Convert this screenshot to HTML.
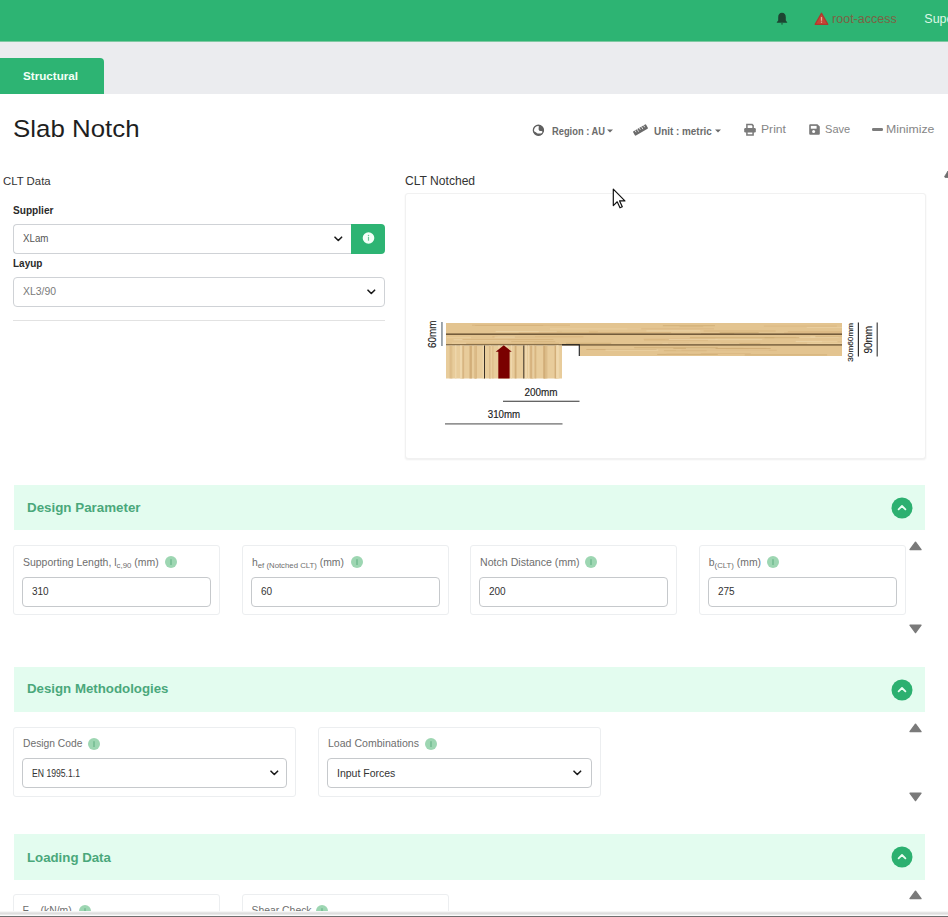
<!DOCTYPE html>
<html><head><meta charset="utf-8"><style>
html,body{margin:0;padding:0;width:948px;height:917px;overflow:hidden;background:#fff;}
body{position:relative;font-family:"Liberation Sans", sans-serif;}
.t{position:absolute;white-space:nowrap;}
sub{font-size:0.75em;vertical-align:-0.3em;line-height:0;}
</style></head><body>
<div style="position:absolute;left:0px;top:0px;width:948px;height:41px;background:#2db473;"></div><div style="position:absolute;left:0px;top:41px;width:948px;height:1px;background:#7fc9a2;"></div><div style="position:absolute;left:0px;top:42px;width:948px;height:52px;background:#ebecef;"></div><div style="position:absolute;left:0px;top:57.6px;width:104px;height:36.4px;background:#2db473;border-top-right-radius:4px;"></div><div class="t " style="left:23.00px;top:70.10px;font-size:11.7px;line-height:11.7px;color:#f2fff6;font-weight:700;transform:scaleX(0.9964);transform-origin:0 0;">Structural</div><svg style="position:absolute;left:776px;top:12px;" width="12" height="13" viewBox="0 0 12 13"><path d="M6 0.8C3.6 0.8 2.2 2.6 2.2 5.2V8.6L0.8 10.2V10.7H11.2V10.2L9.8 8.6V5.2C9.8 2.6 8.4 0.8 6 0.8z" fill="#1d4432"/><path d="M4.9 11.4H7.1A1.1 1.1 0 0 1 4.9 11.4z" fill="#1d4432"/></svg><svg style="position:absolute;left:814px;top:12px;" width="15" height="14" viewBox="0 0 15 14"><path d="M7.5 1.2L13.8 12.3H1.2z" fill="#c64536" stroke="#b0382c" stroke-width="1.3" stroke-linejoin="round"/><rect x="6.9" y="5" width="1.2" height="3.8" fill="#e2b09a"/><rect x="6.9" y="9.6" width="1.2" height="1.2" fill="#e2b09a"/></svg><div class="t " style="left:831.60px;top:12.64px;font-size:12px;line-height:12px;color:#7d6244;font-weight:400;transform:scaleX(1.0452);transform-origin:0 0;">root-access</div><div class="t " style="left:924.30px;top:12.62px;font-size:12.5px;line-height:12.5px;color:#dff7e6;font-weight:400;">Supe</div><div class="t " style="left:12.70px;top:117.46px;font-size:24.5px;line-height:24.5px;color:#1f1f1f;font-weight:400;transform:scaleX(1.0559);transform-origin:0 0;">Slab Notch</div><svg style="position:absolute;left:532px;top:124px;" width="13" height="13" viewBox="0 0 13 13"><circle cx="6.4" cy="6.3" r="5.05" fill="none" stroke="#606060" stroke-width="1.3"/><path d="M6.8 1.2L6.6 5.6L7.6 7.1L9.6 7.1L11.4 8.3A5.6 5.6 0 0 0 6.8 1.2z" fill="#606060"/><path d="M1.1 7.1L3.4 8.1L5.6 9.4L10.2 9.6L11.2 8.9A5.6 5.6 0 0 1 1.1 7.1z" fill="#606060"/></svg><div class="t " style="left:551.60px;top:125.61px;font-size:10.5px;line-height:10.5px;color:#6b6b6b;font-weight:700;transform:scaleX(0.8881);transform-origin:0 0;">Region : AU</div><svg style="position:absolute;left:607px;top:129px;" width="6" height="4" viewBox="0 0 6 4"><path d="M0 0.5H6L3 3.5z" fill="#6b6b6b"/></svg><svg style="position:absolute;left:632px;top:123px;" width="17" height="14" viewBox="0 0 17 14"><g transform="rotate(-30 8.5 7)"><rect x="1" y="4.5" width="15" height="5" rx="0.8" fill="#6a6a6a"/><g stroke="#fff" stroke-width="0.7"><line x1="3.5" y1="4.5" x2="3.5" y2="6.7"/><line x1="6" y1="4.5" x2="6" y2="7.5"/><line x1="8.5" y1="4.5" x2="8.5" y2="6.7"/><line x1="11" y1="4.5" x2="11" y2="7.5"/><line x1="13.5" y1="4.5" x2="13.5" y2="6.7"/></g></g></svg><div class="t " style="left:654.00px;top:125.61px;font-size:10.5px;line-height:10.5px;color:#6b6b6b;font-weight:700;transform:scaleX(0.9426);transform-origin:0 0;">Unit : metric</div><svg style="position:absolute;left:715px;top:129px;" width="6" height="4" viewBox="0 0 6 4"><path d="M0 0.5H6L3 3.5z" fill="#6b6b6b"/></svg><svg style="position:absolute;left:744px;top:123px;" width="12" height="13" viewBox="0 0 12 13"><path d="M2.9 5.2V1.6h5.2l1 1V5.2" fill="none" stroke="#7a7a7a" stroke-width="1.5"/><rect x="0.2" y="5" width="11.6" height="4.4" rx="1.2" fill="#7a7a7a"/><path d="M2.9 8.4v3.7h6.2V8.4" fill="none" stroke="#7a7a7a" stroke-width="1.5"/></svg><div class="t " style="left:760.50px;top:124.27px;font-size:11.5px;line-height:11.5px;color:#868686;font-weight:400;transform:scaleX(1.0565);transform-origin:0 0;">Print</div><svg style="position:absolute;left:809px;top:124px;" width="11" height="11" viewBox="0 0 11 11"><path d="M0.2 1.2a1 1 0 0 1 1-1h7.2l2.4 2.4v7.2a1 1 0 0 1-1 1H1.2a1 1 0 0 1-1-1z" fill="#7a7a7a"/><rect x="1.8" y="1.9" width="5.8" height="2.8" fill="#fff"/><circle cx="4.6" cy="7.4" r="1.5" fill="#fff"/></svg><div class="t " style="left:825.20px;top:124.27px;font-size:11.5px;line-height:11.5px;color:#868686;font-weight:400;transform:scaleX(0.9615);transform-origin:0 0;">Save</div><div style="position:absolute;left:872.3px;top:127.9px;width:10.7px;height:3px;background:#7c7c7c;border-radius:1.2px;"></div><div class="t " style="left:886.00px;top:124.49px;font-size:11px;line-height:11px;color:#868686;font-weight:400;transform:scaleX(1.1143);transform-origin:0 0;">Minimize</div><div class="t " style="left:2.50px;top:175.72px;font-size:11.2px;line-height:11.2px;color:#333;font-weight:400;transform:scaleX(1.0170);transform-origin:0 0;">CLT Data</div><div class="t " style="left:13.30px;top:204.71px;font-size:10.5px;line-height:10.5px;color:#2a2a2a;font-weight:700;transform:scaleX(0.9643);transform-origin:0 0;">Supplier</div><div style="position:absolute;left:13px;top:224px;width:338px;height:30px;box-sizing:border-box;border:1px solid #cfd2d6;border-right:none;border-radius:4px 0 0 4px;background:#fff;"></div><div class="t " style="left:22.60px;top:233.87px;font-size:10.2px;line-height:10.2px;color:#555;font-weight:400;transform:scaleX(0.9577);transform-origin:0 0;">XLam</div><svg style="position:absolute;left:334px;top:236px;" width="9" height="6" viewBox="0 0 9 6"><path d="M1 1.2L4.3 4.5L7.6 1.2" fill="none" stroke="#1b1b1b" stroke-width="1.6" stroke-linecap="round" stroke-linejoin="round"/></svg><div style="position:absolute;left:351px;top:224px;width:34px;height:30px;background:#2db473;border-radius:0 4px 4px 0;"></div><svg style="position:absolute;left:361.5px;top:231.5px;" width="13" height="13" viewBox="0 0 13 13"><circle cx="6.5" cy="6" r="5.8" fill="#f3fff7"/><rect x="5.9" y="4.9" width="1.2" height="3.8" fill="#6cc596"/><circle cx="6.5" cy="3.5" r="0.75" fill="#6cc596"/></svg><div class="t " style="left:13.30px;top:257.81px;font-size:10.5px;line-height:10.5px;color:#2a2a2a;font-weight:700;transform:scaleX(0.9516);transform-origin:0 0;">Layup</div><div style="position:absolute;left:13px;top:277px;width:372px;height:30px;box-sizing:border-box;border:1px solid #cfd2d6;border-radius:4px;background:#fff;"></div><div class="t " style="left:22.60px;top:286.87px;font-size:10.2px;line-height:10.2px;color:#7a7a7a;font-weight:400;transform:scaleX(1.0219);transform-origin:0 0;">XL3/90</div><svg style="position:absolute;left:367px;top:289px;" width="9" height="6" viewBox="0 0 9 6"><path d="M1 1.2L4.3 4.5L7.6 1.2" fill="none" stroke="#1b1b1b" stroke-width="1.6" stroke-linecap="round" stroke-linejoin="round"/></svg><div style="position:absolute;left:13px;top:320px;width:372px;height:1px;background:#e2e2e2;"></div><div class="t " style="left:404.80px;top:174.64px;font-size:12px;line-height:12px;color:#333;font-weight:400;transform:scaleX(1.0072);transform-origin:0 0;">CLT Notched</div><div style="position:absolute;left:405px;top:193px;width:521px;height:266px;box-sizing:border-box;border:1px solid #f1f1f1;border-radius:3px;box-shadow:0 1px 2px rgba(0,0,0,0.07);background:#fff;"></div><svg style="position:absolute;left:0;top:0" width="948" height="917" viewBox="0 0 948 917"><rect x="446" y="323" width="396" height="22" fill="#e3c490"/><rect x="580" y="345" width="262" height="11" fill="#e3c490"/><rect x="495.6" y="330.9" width="93.3" height="1" fill="#eed7ad" opacity="0.8"/><rect x="676.1" y="349.9" width="92.7" height="1" fill="#eed7ad" opacity="0.8"/><rect x="518.9" y="332.3" width="77.4" height="1" fill="#d9b682" opacity="0.8"/><rect x="688.8" y="342.7" width="32.0" height="1" fill="#ecd2a4" opacity="0.8"/><rect x="451.8" y="342.6" width="82.2" height="1" fill="#ecd2a4" opacity="0.8"/><rect x="744.7" y="354.4" width="82.4" height="1" fill="#d0ac75" opacity="0.8"/><rect x="795.7" y="340.9" width="46.3" height="1" fill="#eed7ad" opacity="0.8"/><rect x="665.2" y="339.1" width="97.1" height="1" fill="#ecd2a4" opacity="0.8"/><rect x="497.7" y="336.1" width="37.4" height="1" fill="#eed7ad" opacity="0.8"/><rect x="657.2" y="353.9" width="60.6" height="1" fill="#d0ac75" opacity="0.8"/><rect x="668.0" y="342.9" width="92.3" height="1" fill="#d6b37c" opacity="0.8"/><rect x="701.1" y="333.0" width="33.0" height="1" fill="#d0ac75" opacity="0.8"/><rect x="662.3" y="343.4" width="77.1" height="1" fill="#ecd2a4" opacity="0.8"/><rect x="663.9" y="350.2" width="42.8" height="1" fill="#d6b37c" opacity="0.8"/><rect x="822.1" y="341.3" width="19.9" height="1" fill="#d6b37c" opacity="0.8"/><rect x="453.6" y="339.3" width="54.2" height="1" fill="#eed7ad" opacity="0.8"/><rect x="679.5" y="326.1" width="23.6" height="1" fill="#d9b682" opacity="0.8"/><rect x="796.3" y="336.8" width="42.3" height="1" fill="#ecd2a4" opacity="0.8"/><rect x="475.2" y="325.0" width="68.0" height="1" fill="#d6b37c" opacity="0.8"/><rect x="556.8" y="331.5" width="41.1" height="1" fill="#d6b37c" opacity="0.8"/><rect x="810.3" y="336.5" width="31.7" height="1" fill="#eed7ad" opacity="0.8"/><rect x="643.6" y="338.7" width="71.5" height="1" fill="#d9b682" opacity="0.8"/><rect x="681.6" y="349.8" width="95.2" height="1" fill="#d9b682" opacity="0.8"/><rect x="719.7" y="332.1" width="39.0" height="1" fill="#d0ac75" opacity="0.8"/><rect x="644.0" y="339.5" width="63.9" height="1" fill="#d6b37c" opacity="0.8"/><rect x="666.4" y="353.6" width="21.6" height="1" fill="#d9b682" opacity="0.8"/><rect x="673.3" y="347.9" width="70.2" height="1" fill="#d0ac75" opacity="0.8"/><rect x="726.5" y="348.1" width="21.8" height="1" fill="#d6b37c" opacity="0.8"/><rect x="586.3" y="349.0" width="70.2" height="1" fill="#d0ac75" opacity="0.8"/><rect x="731.6" y="347.9" width="34.8" height="1" fill="#d9b682" opacity="0.8"/><rect x="589.3" y="332.0" width="81.8" height="1" fill="#d6b37c" opacity="0.8"/><rect x="710.7" y="348.0" width="60.0" height="1" fill="#d0ac75" opacity="0.8"/><rect x="703.7" y="330.5" width="72.0" height="1" fill="#d6b37c" opacity="0.8"/><rect x="806.7" y="326.9" width="35.3" height="1" fill="#ecd2a4" opacity="0.8"/><rect x="811.1" y="341.2" width="26.4" height="1" fill="#ecd2a4" opacity="0.8"/><rect x="685.9" y="347.7" width="29.7" height="1" fill="#ecd2a4" opacity="0.8"/><rect x="764.6" y="337.2" width="34.7" height="1" fill="#d0ac75" opacity="0.8"/><rect x="689.9" y="337.2" width="84.5" height="1" fill="#d0ac75" opacity="0.8"/><rect x="634.2" y="347.2" width="83.5" height="1" fill="#d0ac75" opacity="0.8"/><rect x="605.5" y="349.6" width="52.8" height="1" fill="#eed7ad" opacity="0.8"/><rect x="627.4" y="328.3" width="86.6" height="1" fill="#d9b682" opacity="0.8"/><rect x="807.1" y="342.7" width="34.9" height="1" fill="#ecd2a4" opacity="0.8"/><rect x="763.9" y="325.6" width="73.0" height="1" fill="#d9b682" opacity="0.8"/><rect x="784.1" y="332.3" width="57.9" height="1" fill="#d9b682" opacity="0.8"/><rect x="538.9" y="331.7" width="22.8" height="1" fill="#d9b682" opacity="0.8"/><rect x="787.9" y="331.3" width="54.1" height="1" fill="#d6b37c" opacity="0.8"/><rect x="511.3" y="341.1" width="44.0" height="1" fill="#d6b37c" opacity="0.8"/><rect x="466.2" y="342.8" width="93.0" height="1" fill="#d6b37c" opacity="0.8"/><rect x="815.4" y="336.2" width="26.6" height="1" fill="#d6b37c" opacity="0.8"/><rect x="492.4" y="336.3" width="91.0" height="1" fill="#d6b37c" opacity="0.8"/><rect x="550.0" y="328.4" width="91.2" height="1" fill="#ecd2a4" opacity="0.8"/><rect x="662.9" y="325.2" width="52.0" height="1" fill="#d0ac75" opacity="0.8"/><rect x="646.4" y="330.4" width="53.8" height="1" fill="#eed7ad" opacity="0.8"/><rect x="446.7" y="337.2" width="24.4" height="1" fill="#ecd2a4" opacity="0.8"/><rect x="472.0" y="324.7" width="98.0" height="1" fill="#d6b37c" opacity="0.8"/><rect x="566.0" y="342.8" width="45.2" height="1" fill="#d0ac75" opacity="0.8"/><rect x="668.9" y="339.0" width="48.9" height="1" fill="#ecd2a4" opacity="0.8"/><rect x="494.5" y="336.6" width="20.3" height="1" fill="#eed7ad" opacity="0.8"/><rect x="700.9" y="353.1" width="49.9" height="1" fill="#d9b682" opacity="0.8"/><rect x="462.5" y="339.0" width="90.9" height="1" fill="#d6b37c" opacity="0.8"/><rect x="446" y="333.4" width="396" height="1.6" fill="#745c3b"/><rect x="446" y="344.2" width="396" height="1.4" fill="#745c3b"/><rect x="446" y="345.5" width="116" height="33" fill="#e8cc9b"/><rect x="489.1" y="345.5" width="2.1" height="33" fill="#f0d8ae" opacity="0.9"/><rect x="482.6" y="345.5" width="1.7" height="33" fill="#f0d8ae" opacity="0.9"/><rect x="474.7" y="345.5" width="2.0" height="33" fill="#cfab76" opacity="0.9"/><rect x="455.1" y="345.5" width="1.3" height="33" fill="#f0d8ae" opacity="0.9"/><rect x="461.7" y="345.5" width="2.4" height="33" fill="#d6b37e" opacity="0.9"/><rect x="489.3" y="345.5" width="1.2" height="33" fill="#cfab76" opacity="0.9"/><rect x="525.0" y="345.5" width="2.0" height="33" fill="#f0d8ae" opacity="0.9"/><rect x="529.9" y="345.5" width="2.2" height="33" fill="#d6b37e" opacity="0.9"/><rect x="528.0" y="345.5" width="1.2" height="33" fill="#f0d8ae" opacity="0.9"/><rect x="534.5" y="345.5" width="1.8" height="33" fill="#d6b37e" opacity="0.9"/><rect x="510.8" y="345.5" width="1.3" height="33" fill="#f0d8ae" opacity="0.9"/><rect x="449.7" y="345.5" width="1.0" height="33" fill="#d6b37e" opacity="0.9"/><rect x="460.0" y="345.5" width="2.3" height="33" fill="#f0d8ae" opacity="0.9"/><rect x="554.6" y="345.5" width="2.2" height="33" fill="#cfab76" opacity="0.9"/><rect x="451.1" y="345.5" width="1.2" height="33" fill="#dcbb88" opacity="0.9"/><rect x="531.6" y="345.5" width="1.8" height="33" fill="#d6b37e" opacity="0.9"/><rect x="545.2" y="345.5" width="2.2" height="33" fill="#dcbb88" opacity="0.9"/><rect x="474.4" y="345.5" width="2.0" height="33" fill="#dcbb88" opacity="0.9"/><rect x="498.3" y="345.5" width="1.4" height="33" fill="#f0d8ae" opacity="0.9"/><rect x="514.7" y="345.5" width="1.8" height="33" fill="#cfab76" opacity="0.9"/><rect x="556.2" y="345.5" width="1.8" height="33" fill="#f0d8ae" opacity="0.9"/><rect x="557.0" y="345.5" width="2.3" height="33" fill="#f0d8ae" opacity="0.9"/><rect x="556.3" y="345.5" width="2.0" height="33" fill="#f0d8ae" opacity="0.9"/><rect x="532.4" y="345.5" width="1.2" height="33" fill="#f0d8ae" opacity="0.9"/><rect x="492.3" y="345.5" width="1.2" height="33" fill="#dcbb88" opacity="0.9"/><rect x="503.3" y="345.5" width="2.4" height="33" fill="#f0d8ae" opacity="0.9"/><rect x="505.4" y="345.5" width="1.9" height="33" fill="#f0d8ae" opacity="0.9"/><rect x="544.0" y="345.5" width="1.4" height="33" fill="#dcbb88" opacity="0.9"/><rect x="469.5" y="345.5" width="2.4" height="33" fill="#cfab76" opacity="0.9"/><rect x="543.2" y="345.5" width="2.0" height="33" fill="#cfab76" opacity="0.9"/><rect x="484" y="345.5" width="1" height="33" fill="#3a3026"/><rect x="523.3" y="345.5" width="1" height="33" fill="#3a3026"/><path d="M562 344.8H579.3V356" fill="none" stroke="#1a1a1a" stroke-width="1.1"/><path d="M498.3 378.6V351.7H495.7L503.8 345.3L511.8 351.7H509.6V378.6z" fill="#7a0000"/><rect x="441.3" y="322" width="1.3" height="24" fill="#6d7a85"/><rect x="503" y="400.7" width="76.5" height="1.2" fill="#555"/><rect x="445" y="423.3" width="117.5" height="1.2" fill="#666"/><rect x="857.8" y="322.5" width="1.2" height="34" fill="#333"/><rect x="876.6" y="322.5" width="1.2" height="34" fill="#444"/><text x="524.5" y="395.8" font-size="10" font-family="Liberation Sans" fill="#1c1c1c" stroke="#1c1c1c" stroke-width="0.15" textLength="33" lengthAdjust="spacingAndGlyphs">200mm</text><text x="487.8" y="418" font-size="10" font-family="Liberation Sans" fill="#1c1c1c" stroke="#1c1c1c" stroke-width="0.15" textLength="32.4" lengthAdjust="spacingAndGlyphs">310mm</text><text transform="translate(436.4 348) rotate(-90)" font-size="10.2" font-family="Liberation Sans" fill="#1c1c1c" stroke="#1c1c1c" stroke-width="0.15" textLength="27.5" lengthAdjust="spacingAndGlyphs">60mm</text><text transform="translate(852.9 361.7) rotate(-90)" font-size="8" font-family="Liberation Sans" fill="#1c1c1c" stroke="#1c1c1c" stroke-width="0.15" textLength="38.8" lengthAdjust="spacingAndGlyphs">30m60mm</text><text transform="translate(871.7 353.6) rotate(-90)" font-size="10.2" font-family="Liberation Sans" fill="#1c1c1c" stroke="#1c1c1c" stroke-width="0.15" textLength="27.7" lengthAdjust="spacingAndGlyphs">90mm</text></svg><svg style="position:absolute;left:612px;top:188px;" width="15" height="22" viewBox="0 0 15 22"><path d="M1.3 1.2V17.6L5.2 13.8L8 19.8L10.3 18.8L7.6 12.9H12.9z" fill="#fff" stroke="#111" stroke-width="1.2" stroke-linejoin="round"/></svg><div style="position:absolute;left:14px;top:485px;width:911px;height:45px;background:#e3fcef;"></div><div class="t " style="left:26.70px;top:500.80px;font-size:13px;line-height:13px;color:#4aa87b;font-weight:700;transform:scaleX(1.0273);transform-origin:0 0;">Design Parameter</div><svg style="position:absolute;left:890.5px;top:496.9px;" width="22" height="22" viewBox="0 0 22 22"><circle cx="11" cy="11" r="10.5" fill="#2cb070"/><path d="M7.6 12.3L11 9L14.4 12.3" fill="none" stroke="#eafff3" stroke-width="1.8" stroke-linecap="round" stroke-linejoin="round"/></svg><div style="position:absolute;left:13px;top:545px;width:207px;height:70px;box-sizing:border-box;border:1px solid #eceef0;border-radius:3px;background:#fff;"></div><div class="t " style="left:22.80px;top:557.50px;font-size:10.4px;line-height:10.4px;color:#6e6e6e;font-weight:400;transform:scaleX(1.0059);transform-origin:0 0;">Supporting Length, l<sub>c,90</sub> (mm)</div><svg style="position:absolute;left:165.4px;top:556px;" width="12" height="12" viewBox="0 0 12 12"><circle cx="6" cy="6" r="6" fill="#9dd6b2"/><rect x="5.5" y="3.2" width="1" height="5.8" fill="#5fae80"/></svg><div style="position:absolute;left:22px;top:577px;width:189px;height:30px;box-sizing:border-box;border:1px solid #c6c9cc;border-radius:4px;background:#fff;"></div><div class="t " style="left:32.00px;top:586.53px;font-size:10px;line-height:10px;color:#333;font-weight:400;">310</div><div style="position:absolute;left:242px;top:545px;width:207px;height:70px;box-sizing:border-box;border:1px solid #eceef0;border-radius:3px;background:#fff;"></div><div class="t " style="left:251.80px;top:557.50px;font-size:10.4px;line-height:10.4px;color:#6e6e6e;font-weight:400;transform:scaleX(0.9978);transform-origin:0 0;">h<sub>ef (Notched CLT)</sub> (mm)</div><svg style="position:absolute;left:351.3px;top:556px;" width="12" height="12" viewBox="0 0 12 12"><circle cx="6" cy="6" r="6" fill="#9dd6b2"/><rect x="5.5" y="3.2" width="1" height="5.8" fill="#5fae80"/></svg><div style="position:absolute;left:251px;top:577px;width:189px;height:30px;box-sizing:border-box;border:1px solid #c6c9cc;border-radius:4px;background:#fff;"></div><div class="t " style="left:261.00px;top:586.53px;font-size:10px;line-height:10px;color:#333;font-weight:400;">60</div><div style="position:absolute;left:470px;top:545px;width:207px;height:70px;box-sizing:border-box;border:1px solid #eceef0;border-radius:3px;background:#fff;"></div><div class="t " style="left:479.80px;top:557.50px;font-size:10.4px;line-height:10.4px;color:#6e6e6e;font-weight:400;transform:scaleX(1.0208);transform-origin:0 0;">Notch Distance (mm)</div><svg style="position:absolute;left:585px;top:556px;" width="12" height="12" viewBox="0 0 12 12"><circle cx="6" cy="6" r="6" fill="#9dd6b2"/><rect x="5.5" y="3.2" width="1" height="5.8" fill="#5fae80"/></svg><div style="position:absolute;left:479px;top:577px;width:189px;height:30px;box-sizing:border-box;border:1px solid #c6c9cc;border-radius:4px;background:#fff;"></div><div class="t " style="left:489.00px;top:586.53px;font-size:10px;line-height:10px;color:#333;font-weight:400;">200</div><div style="position:absolute;left:699px;top:545px;width:207px;height:70px;box-sizing:border-box;border:1px solid #eceef0;border-radius:3px;background:#fff;"></div><div class="t " style="left:708.80px;top:557.50px;font-size:10.4px;line-height:10.4px;color:#6e6e6e;font-weight:400;transform:scaleX(1.0000);transform-origin:0 0;">b<sub>(CLT)</sub> (mm)</div><svg style="position:absolute;left:767.3px;top:556px;" width="12" height="12" viewBox="0 0 12 12"><circle cx="6" cy="6" r="6" fill="#9dd6b2"/><rect x="5.5" y="3.2" width="1" height="5.8" fill="#5fae80"/></svg><div style="position:absolute;left:708px;top:577px;width:189px;height:30px;box-sizing:border-box;border:1px solid #c6c9cc;border-radius:4px;background:#fff;"></div><div class="t " style="left:718.00px;top:586.53px;font-size:10px;line-height:10px;color:#333;font-weight:400;">275</div><svg style="position:absolute;left:909px;top:541px;" width="13" height="10" viewBox="0 0 13 10"><path d="M6.5 1.2L12 8.6H1z" fill="#7a7a7a" stroke="#7a7a7a" stroke-width="1.4" stroke-linejoin="round"/></svg><svg style="position:absolute;left:909px;top:624px;" width="13" height="10" viewBox="0 0 13 10"><path d="M1 1.2H12L6.5 8.6z" fill="#7a7a7a" stroke="#7a7a7a" stroke-width="1.4" stroke-linejoin="round"/></svg><div style="position:absolute;left:14px;top:667px;width:911px;height:45px;background:#e3fcef;"></div><div class="t " style="left:26.70px;top:682.30px;font-size:13px;line-height:13px;color:#4aa87b;font-weight:700;transform:scaleX(1.0203);transform-origin:0 0;">Design Methodologies</div><svg style="position:absolute;left:890.5px;top:678.9px;" width="22" height="22" viewBox="0 0 22 22"><circle cx="11" cy="11" r="10.5" fill="#2cb070"/><path d="M7.6 12.3L11 9L14.4 12.3" fill="none" stroke="#eafff3" stroke-width="1.8" stroke-linecap="round" stroke-linejoin="round"/></svg><div style="position:absolute;left:13px;top:727px;width:283px;height:70px;box-sizing:border-box;border:1px solid #eceef0;border-radius:3px;background:#fff;"></div><div class="t " style="left:22.60px;top:738.50px;font-size:10.4px;line-height:10.4px;color:#6e6e6e;font-weight:400;transform:scaleX(0.9898);transform-origin:0 0;">Design Code</div><svg style="position:absolute;left:87.5px;top:737.8px;" width="12" height="12" viewBox="0 0 12 12"><circle cx="6" cy="6" r="6" fill="#9dd6b2"/><rect x="5.5" y="3.2" width="1" height="5.8" fill="#5fae80"/></svg><div style="position:absolute;left:22px;top:758px;width:265px;height:30px;box-sizing:border-box;border:1px solid #c6c9cc;border-radius:4px;background:#fff;"></div><div class="t " style="left:32.00px;top:768.83px;font-size:10px;line-height:10px;color:#333;font-weight:400;transform:scaleX(0.8630);transform-origin:0 0;">EN 1995.1.1</div><svg style="position:absolute;left:270px;top:770px;" width="9" height="6" viewBox="0 0 9 6"><path d="M1 1.2L4.3 4.5L7.6 1.2" fill="none" stroke="#1b1b1b" stroke-width="1.6" stroke-linecap="round" stroke-linejoin="round"/></svg><div style="position:absolute;left:318px;top:727px;width:283px;height:70px;box-sizing:border-box;border:1px solid #eceef0;border-radius:3px;background:#fff;"></div><div class="t " style="left:327.70px;top:738.50px;font-size:10.4px;line-height:10.4px;color:#6e6e6e;font-weight:400;transform:scaleX(1.0159);transform-origin:0 0;">Load Combinations</div><svg style="position:absolute;left:424.6px;top:737.8px;" width="12" height="12" viewBox="0 0 12 12"><circle cx="6" cy="6" r="6" fill="#9dd6b2"/><rect x="5.5" y="3.2" width="1" height="5.8" fill="#5fae80"/></svg><div style="position:absolute;left:327px;top:758px;width:265px;height:30px;box-sizing:border-box;border:1px solid #c6c9cc;border-radius:4px;background:#fff;"></div><div class="t " style="left:336.50px;top:768.67px;font-size:10.2px;line-height:10.2px;color:#333;font-weight:400;transform:scaleX(1.0304);transform-origin:0 0;">Input Forces</div><svg style="position:absolute;left:573px;top:770px;" width="9" height="6" viewBox="0 0 9 6"><path d="M1 1.2L4.3 4.5L7.6 1.2" fill="none" stroke="#1b1b1b" stroke-width="1.6" stroke-linecap="round" stroke-linejoin="round"/></svg><svg style="position:absolute;left:909px;top:723px;" width="13" height="10" viewBox="0 0 13 10"><path d="M6.5 1.2L12 8.6H1z" fill="#7a7a7a" stroke="#7a7a7a" stroke-width="1.4" stroke-linejoin="round"/></svg><svg style="position:absolute;left:909px;top:792px;" width="13" height="10" viewBox="0 0 13 10"><path d="M1 1.2H12L6.5 8.6z" fill="#7a7a7a" stroke="#7a7a7a" stroke-width="1.4" stroke-linejoin="round"/></svg><div style="position:absolute;left:14px;top:834px;width:911px;height:46px;background:#e3fcef;"></div><div class="t " style="left:26.70px;top:851.00px;font-size:13px;line-height:13px;color:#4aa87b;font-weight:700;transform:scaleX(1.0183);transform-origin:0 0;">Loading Data</div><svg style="position:absolute;left:890.5px;top:846.4px;" width="22" height="22" viewBox="0 0 22 22"><circle cx="11" cy="11" r="10.5" fill="#2cb070"/><path d="M7.6 12.3L11 9L14.4 12.3" fill="none" stroke="#eafff3" stroke-width="1.8" stroke-linecap="round" stroke-linejoin="round"/></svg><div style="position:absolute;left:13px;top:894px;width:207px;height:70px;box-sizing:border-box;border:1px solid #eceef0;border-radius:3px;background:#fff;"></div><div class="t " style="left:22.60px;top:906.20px;font-size:10.4px;line-height:10.4px;color:#6e6e6e;font-weight:400;">F<sub>ed</sub> (kN/m)</div><svg style="position:absolute;left:79px;top:905px;" width="12" height="12" viewBox="0 0 12 12"><circle cx="6" cy="6" r="6" fill="#9dd6b2"/><rect x="5.5" y="3.2" width="1" height="5.8" fill="#5fae80"/></svg><div style="position:absolute;left:242px;top:894px;width:207px;height:70px;box-sizing:border-box;border:1px solid #eceef0;border-radius:3px;background:#fff;"></div><div class="t " style="left:251.50px;top:906.20px;font-size:10.4px;line-height:10.4px;color:#6e6e6e;font-weight:400;">Shear Check</div><svg style="position:absolute;left:316px;top:905px;" width="12" height="12" viewBox="0 0 12 12"><circle cx="6" cy="6" r="6" fill="#9dd6b2"/><rect x="5.5" y="3.2" width="1" height="5.8" fill="#5fae80"/></svg><svg style="position:absolute;left:909px;top:890px;" width="13" height="10" viewBox="0 0 13 10"><path d="M6.5 1.2L12 8.6H1z" fill="#7a7a7a" stroke="#7a7a7a" stroke-width="1.4" stroke-linejoin="round"/></svg><div style="position:absolute;left:0px;top:911px;width:948px;height:1px;background:#f6f6f6;"></div><div style="position:absolute;left:0px;top:912px;width:948px;height:1px;background:#e6e6e6;"></div><div style="position:absolute;left:0px;top:913px;width:948px;height:1px;background:#dedede;"></div><div style="position:absolute;left:0px;top:914px;width:948px;height:1px;background:#e9e9e9;"></div><div style="position:absolute;left:0px;top:915px;width:948px;height:1px;background:#fbfbfb;"></div><div style="position:absolute;left:0px;top:916px;width:948px;height:1px;background:#6e6e6e;"></div><svg style="position:absolute;left:944px;top:169px;" width="4" height="10" viewBox="0 0 4 10"><path d="M4 2L4 8.5L1.2 8.5Q0.3 8.3 0.8 7.2z" fill="#6e6e6e" stroke="#6e6e6e" stroke-width="0.8" stroke-linejoin="round"/></svg>
</body></html>
